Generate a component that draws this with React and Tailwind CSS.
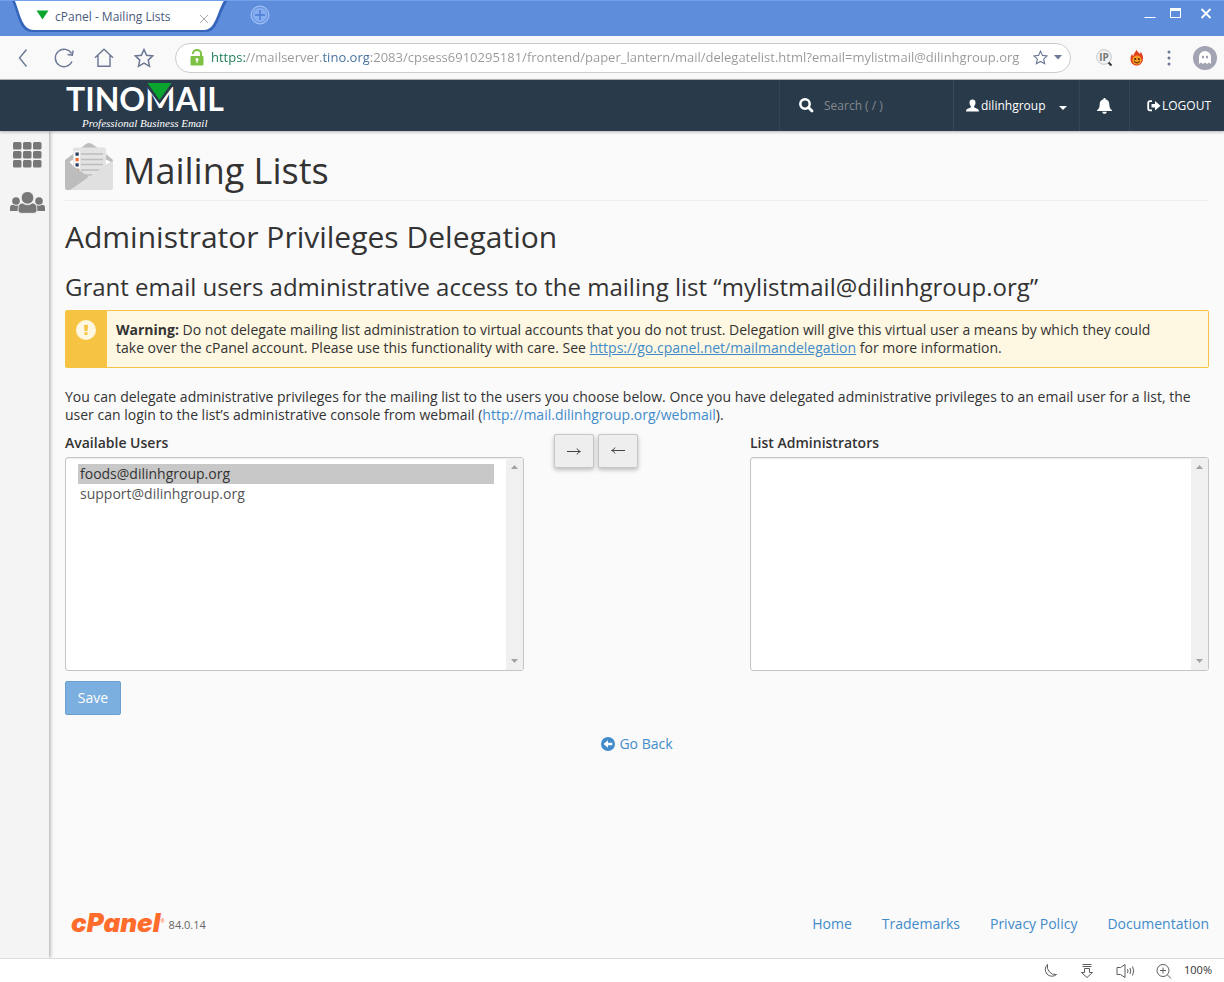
import React from "react";

const urlText =
  "https://mailserver.tino.org:2083/cpsess6910295181/frontend/paper_lantern/mail/delegatelist.html?email=mylistmail@dilinhgroup.org";

const iconBtn = "flex h-6 w-6 items-center justify-center";

function Tab() {
  return (
    <div className="relative h-9 w-[232px]">
      <svg className="absolute inset-0" width="232" height="36" viewBox="0 0 232 36" aria-hidden="true">
        <path d="M11 -2 C18 10 18 31 32 31 H206 C219 31 219 10 229 -2 Z" fill="#3566bb" />
        <path d="M14 -2 C20 10 21 29 34 29 H204 C216 29 217 10 225 -2 Z" fill="#ffffff" />
      </svg>
      <div className="relative flex h-8 items-center pl-9 pr-3">
        <svg width="13" height="10" viewBox="0 0 13 10" className="-mt-1 shrink-0" aria-hidden="true">
          <path d="M0.500 0.500 H12.500 L6.500 9.500 Z" fill="#0aa52e" />
        </svg>
        <span className="ml-1.5 flex-1 text-[12px] text-[#4a5a7d]">cPanel - Mailing Lists</span>
        <button aria-label="Close tab" className="mr-2 flex h-4 w-4 items-center justify-center pt-1">
          <svg width="10" height="10" viewBox="0 0 10 10" stroke="#a9a9a9" fill="none" aria-hidden="true">
            <path d="M1 1 L9 9 M9 1 L1 9" />
          </svg>
        </button>
      </div>
    </div>
  );
}

function TitleBar() {
  return (
    <div className="flex h-9 items-start border-t border-[#72a0ea] bg-[#5e8ddb]">
      <Tab />
      <button aria-label="New tab" className="ml-[18px] mt-1 h-5 w-5">
        <svg width="20" height="20" viewBox="0 0 20 20" fill="none" aria-hidden="true">
          <circle cx="10" cy="10" r="9" fill="#87aef0" stroke="#a5c3f6" />
          <circle cx="10" cy="10" r="7.500" stroke="#5e8ddb" strokeWidth="0.800" />
          <path d="M10 5 V15 M5 10 H15" stroke="#4a7bd0" strokeWidth="1.400" />
        </svg>
      </button>
      <div className="ml-auto flex gap-3.5 pr-3 pt-1">
        <button aria-label="Minimize" className="h-4 w-3">
          <svg width="12" height="16" viewBox="0 0 12 16" stroke="#fff" aria-hidden="true">
            <path d="M0.500 12.500 H11.500" />
          </svg>
        </button>
        <button aria-label="Maximize" className="h-4 w-3">
          <svg width="12" height="16" viewBox="0 0 12 16" stroke="#fff" fill="none" aria-hidden="true">
            <path d="M0.500 3.500 H10.500 V12.500 H0.500 Z" />
            <path d="M0 4.500 H11" strokeWidth="3" />
          </svg>
        </button>
        <button aria-label="Close window" className="ml-1 h-4 w-3">
          <svg width="12" height="16" viewBox="0 0 12 16" stroke="#fff" strokeWidth="1.800" aria-hidden="true">
            <path d="M1.500 4 L10.500 13 M10.500 4 L1.500 13" />
          </svg>
        </button>
      </div>
    </div>
  );
}

function Toolbar() {
  return (
    <div className="flex h-11 items-center border-b border-[#b9bcc0] bg-[#f9f9fa] px-3 text-[#6b7794]">
      <div className="flex gap-4">
        <button aria-label="Back" className={iconBtn}>
          <svg width="20" height="20" viewBox="0 0 20 20" fill="none" stroke="currentColor" strokeWidth="1.400" aria-hidden="true">
            <path d="M12.500 1.500 L5.500 10 L12.500 18.500" />
          </svg>
        </button>
        <button aria-label="Reload" className={iconBtn}>
          <svg width="20" height="20" viewBox="0 0 20 20" fill="none" stroke="currentColor" strokeWidth="1.400" aria-hidden="true">
            <path d="M17.600 5.600 A8.700 8.700 0 1 0 18 13.500" />
            <path d="M19.200 2.500 L18.300 7.200 L13.600 6.500" />
          </svg>
        </button>
        <button aria-label="Home" className={iconBtn}>
          <svg width="20" height="20" viewBox="0 0 20 20" fill="none" stroke="currentColor" strokeWidth="1.400" aria-hidden="true">
            <path d="M1 9.800 L10 1.200 L19 9.800 M4 7.500 V18.300 H16 V7.500" />
          </svg>
        </button>
        <button aria-label="Bookmarks" className={iconBtn}>
          <Star size="20" />
        </button>
      </div>
      <div className="ml-[19px] flex h-[30px] flex-1 items-center rounded-full border border-[#cbcbcb] bg-white pl-3.5 pr-1.5">
        <svg width="14" height="17" viewBox="0 0 14 17" aria-hidden="true" className="shrink-0">
          <path d="M3 5 V4.500 A4 3.500 0 0 1 11 4.500 V7" fill="none" stroke="#7dc242" strokeWidth="2" />
          <rect x="0.500" y="7" width="13" height="9.500" rx="1" fill="#7dc242" />
          <circle cx="7" cy="10.500" r="1.500" fill="#fff" />
          <path d="M7 10.500 V14" stroke="#fff" strokeWidth="1.200" />
        </svg>
        <input
          aria-label="Address"
          defaultValue={urlText}
          className="ml-[7px] min-w-0 flex-1 bg-[linear-gradient(to_right,#177a52_0_34px,#979797_34px_111px,#3d6c9c_111px_158px,#979797_158px)] bg-clip-text text-[13px] text-transparent outline-none"
        />
        <button aria-label="Bookmark this page" className="ml-2.5 flex h-5 w-4 items-center justify-center">
          <Star size="15" />
        </button>
        <button aria-label="Bookmark options" className="ml-1 flex h-5 w-3 items-center justify-center">
          <svg width="8" height="5" viewBox="0 0 8 5" fill="currentColor" aria-hidden="true">
            <path d="M0 0 H8 L4 4.500 Z" />
          </svg>
        </button>
      </div>
      <div className="ml-[25px] flex items-center">
        <button aria-label="IP lookup" className="h-5 w-[18px]">
          <svg width="18" height="20" viewBox="0 0 18 20" aria-hidden="true">
            <circle cx="8" cy="9" r="7.300" fill="#f3f3f3" stroke="#c3c8cb" />
            <path d="M12.500 14.500 L15.500 17.500" stroke="#3c3c3c" strokeWidth="2.200" />
            <text x="8" y="13" textAnchor="middle" fontSize="10" fontWeight="700" fill="#777">IP</text>
          </svg>
        </button>
        <button aria-label="Hola extension" className="ml-[15px] h-[18px] w-4">
          <svg width="16" height="18" viewBox="0 0 16 18" aria-hidden="true">
            <path d="M7 0 C8 3 10 3 10.500 5 C11.500 4.500 11.500 3.500 12 2.500 C12.500 5 14.500 6.500 14 10 C13.500 14 11 16.500 8 16.500 C4 16.500 1.500 14 1.500 10 C1.500 8 2 6.500 3 5 C3.500 6 3.500 6.500 4.500 7 C4.500 4 7.500 3 7 0 Z" fill="#e2401b" />
            <circle cx="8" cy="11" r="4.600" fill="#f59a23" />
            <path d="M5 12.500 Q8 15.500 11 12.500" fill="none" stroke="#4b2208" />
            <circle cx="6.200" cy="10" r="1" fill="#4b2208" />
            <circle cx="9.800" cy="10" r="1" fill="#4b2208" />
          </svg>
        </button>
        <button aria-label="Browser menu" className="ml-4 flex h-5 w-4 items-center justify-center">
          <svg width="4" height="16" viewBox="0 0 4 16" fill="currentColor" aria-hidden="true">
            <circle cx="2" cy="2" r="1.500" /><circle cx="2" cy="8" r="1.500" /><circle cx="2" cy="14" r="1.500" />
          </svg>
        </button>
        <button aria-label="Profile" className="-mr-[5px] ml-4 h-6 w-6">
          <svg width="24" height="24" viewBox="0 0 24 24" aria-hidden="true">
            <circle cx="12" cy="12" r="12" fill="#a2a3b3" />
            <path d="M6 18 V11 A6 6 0 0 1 18 11 V18 L16 16.500 L14 18 L12 16.500 L10 18 L8 16.500 Z" fill="#fff" />
            <ellipse cx="10" cy="11" rx="0.900" ry="1.600" fill="#8788a0" />
            <ellipse cx="14" cy="11" rx="0.900" ry="1.600" fill="#8788a0" />
          </svg>
        </button>
      </div>
    </div>
  );
}

function Star({ size }) {
  return (
    <svg width={size} height={size} viewBox="0 0 20 20" fill="none" stroke="currentColor" strokeWidth="1.500" aria-hidden="true">
      <path d="M10 1.500 L12.600 7.200 L18.800 7.900 L14.200 12.100 L15.500 18.300 L10 15.200 L4.500 18.300 L5.800 12.100 L1.200 7.900 L7.400 7.200 Z" />
    </svg>
  );
}

function Header() {
  return (
    <header className="relative z-10 flex h-[51px] bg-[#293a4a] text-[12px] text-white shadow-[0_1px_3px_rgba(0,0,0,0.3)]">
      <a href="#home" aria-label="TinoMail home" className="relative ml-[66px] block w-[160px]">
        <span className="block h-[37px] whitespace-nowrap font-['Lato'] text-[32px] font-bold leading-[38px]">TINOMAIL</span>
        <svg className="absolute left-[78px] top-0.5" width="32" height="24" viewBox="0 0 32 24" aria-hidden="true">
          <path d="M1 0 H30 L29 4 L15.500 22 L2 4 Z" fill="#293a4a" />
          <path d="M3.500 1 H27.500 L15.500 18 Z" fill="#0aa52e" />
        </svg>
        <span className="block pl-4 font-['Liberation_Serif'] text-[11px] italic leading-[12px]">Professional Business Email</span>
      </a>
      <div className="ml-auto flex">
        <label className="flex w-[174px] items-center border-l border-[#334556] pl-[19px]">
          <svg width="15" height="15" viewBox="0 0 15 15" fill="none" stroke="#fff" aria-hidden="true" className="shrink-0">
            <circle cx="6" cy="6" r="4.700" strokeWidth="2.500" />
            <path d="M9.500 9.500 L13 13" strokeWidth="2.800" strokeLinecap="round" />
          </svg>
          <input aria-label="Search" placeholder="Search ( / )" className="ml-[10px] w-full min-w-0 bg-transparent text-[12px] outline-none placeholder:text-[#84898e]" />
        </label>
        <button className="flex w-[126px] items-center border-l border-[#3a4a59] pl-3">
          <svg width="13" height="13" viewBox="0 0 13 13" fill="#fff" aria-hidden="true">
            <path d="M6.500 0.500 C8.800 0.500 9.600 2 9.500 4 C9.400 5.800 8.300 7 8 7.800 C8 9.400 13 9 13 12.500 H0 C0 9 5 9.400 5 7.800 C4.700 7 3.600 5.800 3.500 4 C3.400 2 4.200 0.500 6.500 0.500 Z" />
          </svg>
          <span className="ml-0.5">dilinhgroup</span>
          <svg className="ml-[13px] mt-1" width="8" height="4" viewBox="0 0 8 4" fill="#fff" aria-hidden="true"><path d="M0 0 H8 L4 4 Z" /></svg>
        </button>
        <button aria-label="Notifications" className="flex w-[50px] items-center justify-center border-l border-[#334556]">
          <svg width="15" height="16" viewBox="0 0 15 16" fill="#fff" aria-hidden="true">
            <path d="M7.500 0 C8.300 0 8.600 0.500 8.600 1.200 C11 1.700 12.300 3.700 12.300 6 C12.300 9.500 13.200 11 15 12.300 V13 H0 V12.300 C1.800 11 2.700 9.500 2.700 6 C2.700 3.700 4 1.700 6.400 1.200 C6.400 0.500 6.700 0 7.500 0 Z M5.300 13.700 H9.700 C9.700 15 8.700 15.800 7.500 15.800 S5.300 15 5.300 13.700 Z" />
          </svg>
        </button>
        <a href="#logout" className="flex w-[95px] items-center border-l border-[#334556] pl-[17px]">
          <svg width="14" height="12" viewBox="0 0 14 12" aria-hidden="true" className="shrink-0">
            <path d="M5 1.200 H3 A1.800 1.800 0 0 0 1.200 3 V8.500 A1.800 1.800 0 0 0 3 10.300 H5" fill="none" stroke="#fff" strokeWidth="1.800" />
            <path d="M4.500 4 H8 V1 L13.500 5.800 L8 10.500 V7.500 H4.500 Z" fill="#fff" />
          </svg>
          <span className="ml-px">LOGOUT</span>
        </a>
      </div>
    </header>
  );
}

function Sidebar() {
  return (
    <nav aria-label="Main" className="flex w-[49px] shrink-0 flex-col items-center bg-[#f4f4f4] pl-1.5 pt-[11px] shadow-[1px_0_4px_rgba(0,0,0,0.35)]">
      <a href="#apps" aria-label="Applications">
        <svg width="29" height="26" viewBox="0 0 29 26" fill="#777" aria-hidden="true">
          {[0, 10, 20].map((x) => [0, 9, 18].map((y) => <rect key={x + "-" + y} x={x} y={y} width="8.500" height="7.500" rx="1.500" />))}
        </svg>
      </a>
      <a href="#users" aria-label="User manager" className="mt-6">
        <svg width="35" height="22" viewBox="0 0 35 22" fill="#777" aria-hidden="true">
          <circle cx="6" cy="9" r="3.800" />
          <circle cx="29" cy="9" r="3.800" />
          <path d="M0 19 V16 Q0 12.800 3 12.800 Q6 14.500 9.500 12.800 L8 19 Z" />
          <path d="M35 19 V16 Q35 12.800 32 12.800 Q29 14.500 25.500 12.800 L27 19 Z" />
          <circle cx="17.500" cy="5.800" r="6.300" stroke="#f4f4f4" strokeWidth="0.800" />
          <path d="M8 18 Q8 11 12.500 11 Q17.500 14.500 22.500 11 Q27 11 27 18 Q27 21.300 24 21.300 H11 Q8 21.300 8 18 Z" stroke="#f4f4f4" strokeWidth="0.800" />
        </svg>
      </a>
    </nav>
  );
}

function MailIcon() {
  return (
    <svg width="48" height="47" viewBox="0 0 48 47" aria-hidden="true" className="shrink-0 self-start">
      <path d="M16 5 L21 1 Q24 -1 27 1 L33 5 Z" fill="#bdbdbd" />
      <path d="M0 17 L8 11 H41 L48 17 V30 H0 Z" fill="#bdbdbd" />
      <path d="M4.500 19 L8 16.500 V23 Z M46 19 L41 16.500 V22 Z" fill="#fff" />
      <path d="M8 6 Q8 4.500 9.500 4.500 H39.500 Q41 4.500 41 6 V34 H8 Z" fill="#e3e3e3" />
      <rect x="9" y="8" width="6" height="6" fill="#f8f8f8" />
      <rect x="9" y="13.500" width="6" height="6" fill="#f8f8f8" />
      <rect x="9" y="19" width="6" height="6" fill="#f8f8f8" />
      <rect x="10.500" y="9.500" width="3.200" height="3.200" fill="#293a5a" />
      <rect x="10.500" y="15" width="3.200" height="3.200" fill="#ff6c2c" />
      <rect x="10.500" y="20.300" width="3.200" height="3.200" fill="#293a5a" />
      <path d="M16 11 H38 M16 16.500 H38 M16 21.500 H38 M16 27 H36 M20 32 H28" stroke="#bdbdbd" strokeWidth="1.500" />
      <path d="M12 26 H14 V27.800 Z" fill="#ff6c2c" />
      <path d="M0 17.500 L24 34 L7 47 H2 Q0 47 0 45 Z" fill="#bdbdbd" />
      <path d="M48 17.500 V45 Q48 47 46 47 H5 L24 34 Z" fill="#e0e0e0" />
    </svg>
  );
}

function ListBox({ id, label, users, selected }) {
  return (
    <div className="flex-1">
      <label htmlFor={id} className="block pb-[5px] text-[14px] font-semibold leading-[18px]">{label}</label>
      <div className="flex h-[214px] overflow-hidden rounded-[3px] border border-[#c5c5c5] bg-white shadow-[inset_0_1px_1px_rgba(0,0,0,0.08)]">
        <select
          id={id}
          multiple
          defaultValue={selected}
          className="min-w-0 flex-1 overflow-hidden bg-transparent px-3 py-1.5 text-[14px] text-[#555] outline-none"
        >
          {users.map((u) => (
            <option key={u} className="h-5 px-0.5 py-0 leading-5 checked:bg-[linear-gradient(#c8c8c8,#c8c8c8)] checked:text-[#333]">{u}</option>
          ))}
        </select>
        <div aria-hidden="true" className="flex w-[17px] flex-col items-center justify-between bg-[#f0f0f0] py-[7px]">
          <svg width="7" height="4" viewBox="0 0 7 4" fill="#a3a3a3"><path d="M0 4 H7 L3.500 0 Z" /></svg>
          <svg width="7" height="4" viewBox="0 0 7 4" fill="#a3a3a3"><path d="M0 0 H7 L3.500 4 Z" /></svg>
        </div>
      </div>
    </div>
  );
}

const arrowBtn =
  "flex h-[34px] w-10 items-center justify-center rounded-[2px] border border-[#c6c6c6] bg-[#eee] text-[#333] shadow-[0_2px_4px_rgba(0,0,0,0.25)]";

function Content() {
  const footerLinks = ["Home", "Trademarks", "Privacy Policy", "Documentation"];
  return (
    <div className="flex min-w-0 flex-1 flex-col pl-4 pr-[15px]">
      <main className="text-[14px] leading-[18px]">
        <h1 className="flex items-center gap-2.5 border-b border-[#eee] pb-1.5 pt-3 text-[36px] leading-[47px]">
          <MailIcon />
          <span className="pt-1">Mailing Lists</span>
        </h1>
        <h2 className="pt-5 text-[30px] leading-[32px]">Administrator Privileges Delegation</h2>
        <h3 className="pt-5 text-[24px] leading-[27px]">
          Grant email users administrative access to the mailing list “mylistmail@dilinhgroup.org”
        </h3>
        <div role="alert" className="mt-2.5 flex rounded-[2px] border border-[#f6c342] bg-[#fef7e1]">
          <div className="flex w-[41px] shrink-0 justify-center bg-[#f6c342] pr-0.5 pt-[9px]">
            <svg width="20" height="20" viewBox="0 0 20 20" aria-hidden="true">
              <circle cx="10" cy="10" r="10" fill="#fef7e1" />
              <path d="M8 5 H12 L11.500 11 H8.500 Z M8.500 12.300 H11.500 V15 H8.500 Z" fill="#f6c342" />
            </svg>
          </div>
          <p className="py-2.5 pl-[9px] pr-[50px]">
            <strong className="font-bold">Warning:</strong> Do not delegate mailing list administration to virtual accounts that you do not trust. Delegation will give this virtual user a means by which they could take over the cPanel account. Please use this functionality with care. See{" "}
            <a href="https://go.cpanel.net/mailmandelegation" className="text-[#428bca] underline">https://go.cpanel.net/mailmandelegation</a> for more information.
          </p>
        </div>
        <p className="pt-5">
          You can delegate administrative privileges for the mailing list to the users you choose below. Once you have delegated administrative privileges to an email user for a list, the user can login to the list’s administrative console from webmail (
          <a href="http://mail.dilinhgroup.org/webmail" className="text-[#428bca]">http://mail.dilinhgroup.org/webmail</a>).
        </p>
        <form onSubmit={(e) => e.preventDefault()}>
          <div className="flex pt-2.5">
            <ListBox id="available" label="Available Users" users={["foods@dilinhgroup.org", "support@dilinhgroup.org"]} selected={["foods@dilinhgroup.org"]} />
            <div className="flex w-[226px] items-start gap-1 pl-[30px]">
              <button type="button" aria-label="Add administrator" className={arrowBtn}><ArrowIcon /></button>
              <button type="button" aria-label="Remove administrator" className={arrowBtn}><span className="rotate-180"><ArrowIcon /></span></button>
            </div>
            <ListBox id="admins" label="List Administrators" users={[]} selected={[]} />
          </div>
          <button type="submit" className="mt-2.5 h-[34px] w-14 rounded-[2px] border border-[#6ba1d0] bg-[#7bafdf] text-white">Save</button>
        </form>
        <div className="flex justify-center pt-5">
          <a href="#back" className="flex items-center gap-1 text-[#428bca]">
            <svg width="14" height="14" viewBox="0 0 14 14" aria-hidden="true">
              <circle cx="7" cy="7" r="7" fill="#428bca" />
              <path d="M2.500 7 L7 3.200 V5.700 H11.300 V8.300 H7 V10.800 Z" fill="#fff" />
            </svg>
            Go Back
          </a>
        </div>
      </main>
      <footer className="mt-auto flex items-center pb-[23px] pl-1.5 text-[14px] text-[#428bca]">
        <a href="#cpanel" className="flex items-center whitespace-nowrap">
          <span className="font-['Inter'] text-[26px] font-black italic leading-[24px] text-[#ff6c2c]">cPanel</span>
          <sup className="text-[5px] text-[#ff6c2c]">®</sup>
        </a>
        <span className="ml-1 pt-1 text-[11px] text-[#666]">84.0.14</span>
        <nav aria-label="Footer" className="ml-auto flex gap-[30px]">
          {footerLinks.map((l) => <a key={l} href="#footer">{l}</a>)}
        </nav>
      </footer>
    </div>
  );
}

function ArrowIcon() {
  return (
    <svg width="14" height="8" viewBox="0 0 14 8" fill="none" stroke="#444" aria-hidden="true">
      <path d="M0 4.500 H13 M10 1.500 Q11 4 13.500 4.500 Q11 5 10 7.500" />
    </svg>
  );
}

function StatusBar() {
  return (
    <div className="flex h-6 items-center justify-end gap-[21px] border-t border-[#dcdcdc] bg-white pr-3 text-[#5c5c5c]">
      <button aria-label="Night mode"><svg width="16" height="16" viewBox="0 0 16 16" fill="none" stroke="currentColor" aria-hidden="true"><path d="M5.500 1.500 A6.500 6.500 0 1 0 14.500 11.500 Q10 12 7.500 9 Q4.500 6 5.500 1.500 Z" /></svg></button>
      <button aria-label="Downloads"><svg width="16" height="16" viewBox="0 0 16 16" fill="none" stroke="currentColor" aria-hidden="true"><path d="M3.500 1.500 H12.500 M3.500 3.500 H12.500 M5.500 5.500 H10.500 V9.500 H13.500 L8 14.500 L2.500 9.500 H5.500 V5.500" /></svg></button>
      <button aria-label="Sound"><svg width="19" height="16" viewBox="0 0 19 16" fill="none" stroke="currentColor" aria-hidden="true"><path d="M1 4.500 H4.500 L9 1.500 V14.500 L4.500 11.500 H1 Z M11.500 6 Q12.500 8 11.500 10 M14 5 Q15.500 8 14 11 M16.500 3.500 Q19 8 16.500 12.500" /></svg></button>
      <div className="flex items-center gap-3">
        <button aria-label="Zoom"><svg width="16" height="16" viewBox="0 0 16 16" fill="none" stroke="currentColor" aria-hidden="true"><circle cx="7" cy="7.500" r="6" /><path d="M7 4.500 V10.500 M4 7.500 H10 M11.500 12 L15 15.500" /></svg></button>
        <span className="text-[11px] text-[#333]">100%</span>
      </div>
    </div>
  );
}

export default function App() {
  return (
    <div className="flex min-h-screen flex-col bg-[#fafafa] font-['Open_Sans',sans-serif] text-[#333]">
      <TitleBar />
      <Toolbar />
      <Header />
      <div className="flex flex-1">
        <Sidebar />
        <Content />
      </div>
      <StatusBar />
    </div>
  );
}
